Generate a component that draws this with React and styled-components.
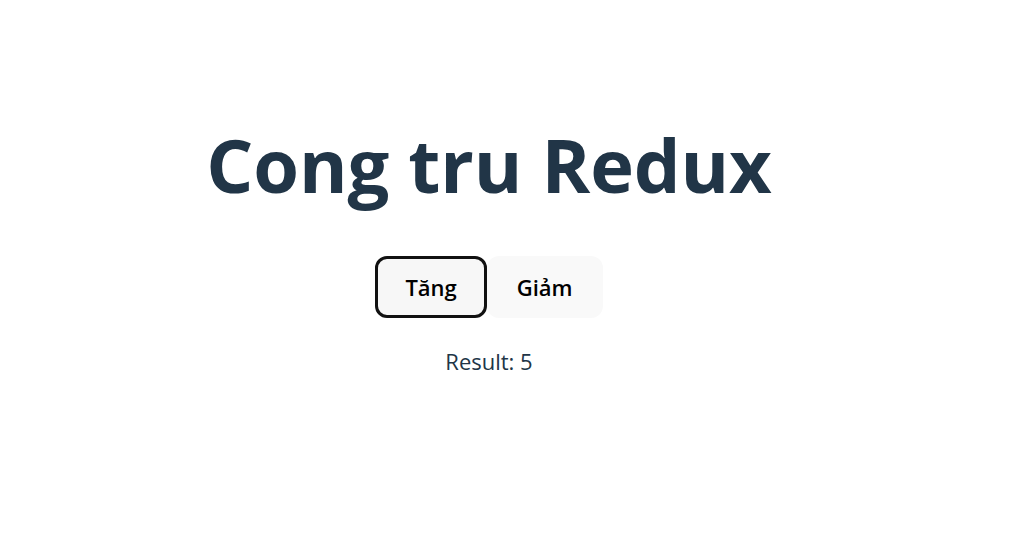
import styled, { createGlobalStyle } from "styled-components";

const GlobalStyle = createGlobalStyle`
  body {
    margin: 0;
    background: #fff;
    color: #213547;
    font-family: "Open Sans", "Noto Sans", "Liberation Sans", sans-serif;
  }
`;

const Page = styled.main`
  display: flex;
  flex-direction: column;
  align-items: center;
  padding: 121px 52px 0 0;
  min-height: 543px;
  box-sizing: border-box;
`;

const Title = styled.h1`
  margin: 0;
  font-size: 74px;
  font-weight: 700;
  line-height: 1.2;
  letter-spacing: -0.1px;
  color: #213547;
`;

const ButtonRow = styled.div`
  display: flex;
  margin-top: 46px;
`;

const Button = styled.button`
  height: 62px;
  padding: 0 27px;
  border-radius: 12px;
  border: 3px solid ${({ $focused }) => ($focused ? "#111" : "transparent")};
  background: ${({ $focused }) => ($focused ? "#f7f7f7" : "#f9f9f9")};
  font-family: inherit;
  font-size: 22px;
  font-weight: 600;
  color: #000;
  cursor: pointer;
`;

const Result = styled.p`
  margin: 28px 0 0;
  font-size: 22px;
  color: #213547;
`;

export default function App() {
  return (
    <>
      <GlobalStyle />
      <Page>
        <Title>Cong tru Redux</Title>
        <ButtonRow>
          <Button $focused>Tăng</Button>
          <Button>Giảm</Button>
        </ButtonRow>
        <Result>Result: 5</Result>
      </Page>
    </>
  );
}
